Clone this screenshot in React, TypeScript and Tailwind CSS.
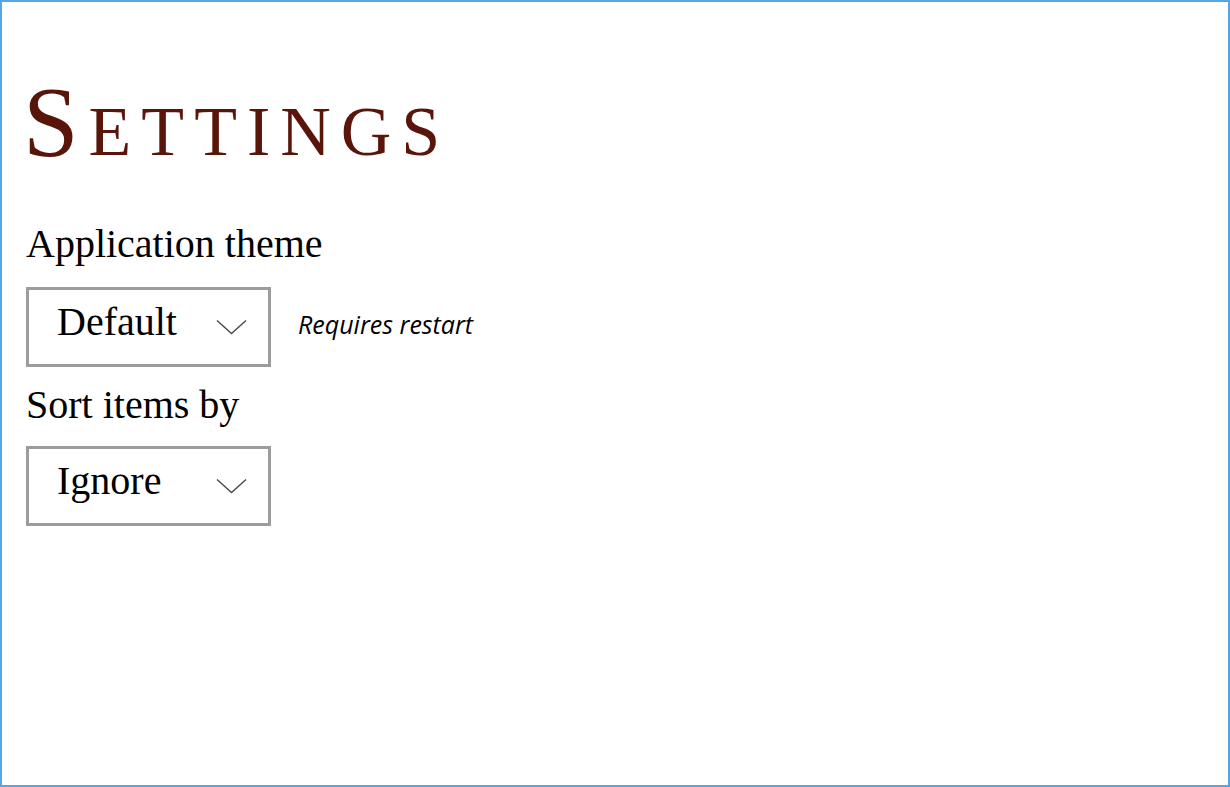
import React from "react";

const SERIF = "font-['Liberation_Serif','Times_New_Roman',serif]";

function Chevron() {
  return (
    <svg width="31" height="16" viewBox="0 0 31 16" fill="none" className="shrink-0">
      <polyline points="1,1.5 15.5,14.5 30,1.5" stroke="#4a4a4a" strokeWidth="1.4" />
    </svg>
  );
}

function Select({ value }: { value: string }) {
  return (
    <div className="flex h-[80px] w-[245px] items-start justify-between border-[3px] border-[#9c9c9c] bg-white pl-[28px] pr-[21px]">
      <span className={`${SERIF} pt-[10px] text-[40px] leading-[44px] text-black`}>{value}</span>
      <div className="flex h-full items-center pb-[1px]">
        <Chevron />
      </div>
    </div>
  );
}

export default function App() {
  return (
    <div className="h-[787px] w-full border-2 border-[#55a6e6] bg-white pl-[24px] pt-[70px]">
      <h1
        className={`${SERIF} -ml-[3px] text-[100px] leading-[100px] tracking-[10px] text-[#5a150b] [font-variant:small-caps]`}
      >
        Settings
      </h1>

      <div className={`${SERIF} mt-[48px] text-[40px] leading-[48px] text-black`}>Application theme</div>
      <div className="mt-[19px] flex items-center gap-[27px]">
        <Select value="Default" />
        <span className="pb-[4px] font-['Open_Sans',sans-serif] text-[25px] font-medium italic text-black">
          Requires restart
        </span>
      </div>

      <div className={`${SERIF} mt-[14px] text-[40px] leading-[48px] text-black`}>Sort items by</div>
      <div className="mt-[17px]">
        <Select value="Ignore" />
      </div>
    </div>
  );
}
